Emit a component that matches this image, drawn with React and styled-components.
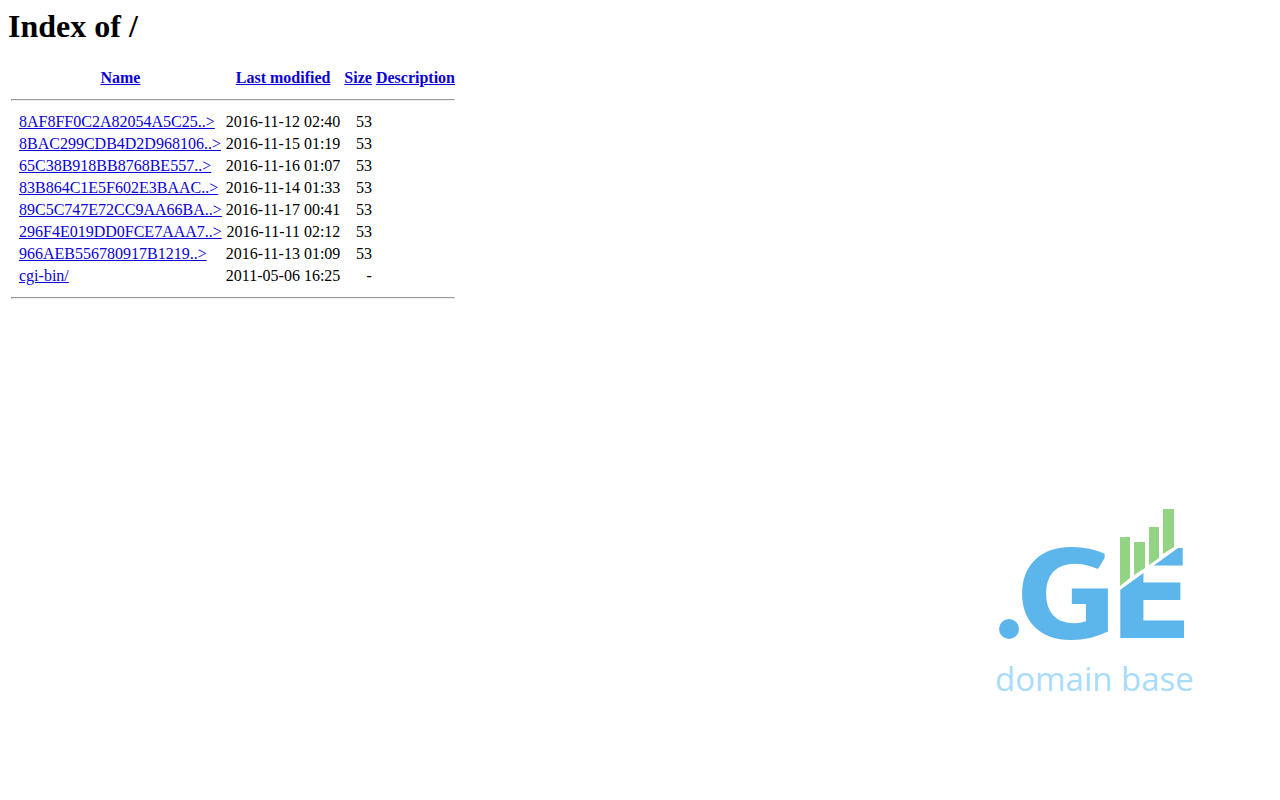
import React from 'react'
import styled, { createGlobalStyle } from 'styled-components'

const GlobalStyle = createGlobalStyle`
    body {
        margin: 0;
        background-color: white;
        color: black;
        font-family: "Liberation Serif", "Times New Roman", serif;
        font-size: 16px;
    }
`;

const Page = styled.div`
    box-sizing: border-box;
    min-height: 100vh;
    padding: 8px;
    display: flex;
    flex-direction: column;
    align-items: flex-start;
`;

const Title = styled.h1`
    margin: 0 0 21px;
    font-size: 32px;
    line-height: 37px;
    font-weight: bold;
`;

const Listing = styled.table`
    border-spacing: 2px;
    line-height: 18px;

    th, td {
        padding: 1px;
        white-space: nowrap;
    }
`;

const Cell = styled.td`
    text-align: ${props => props.$align || 'left'};
`;

const Link = styled.a`
    color: #0a00d8;
    text-decoration: underline;
`;

const Rule = styled.hr`
    margin: 8px 0;
    border: 1px solid;
    border-color: #9a9a9a #eeeeee #eeeeee #9a9a9a;
`;

const Logo = styled.svg`
    width: 210px;
    height: 200px;
    margin: auto 72px 92px 0;
    align-self: flex-end;
    flex-shrink: 0;
`;

const Letter = styled.text`
    fill: #5cb5eb;
    font-family: "DejaVu Sans", sans-serif;
    font-size: 123px;
    font-weight: bold;
`;

const Caption = styled.text`
    fill: #a9dbfb;
    font-family: "Open Sans", sans-serif;
    font-size: 33px;
`;

const columns = ['Name', 'Last modified', 'Size', 'Description']

const files = [
    { name: '8AF8FF0C2A82054A5C25..>', modified: '2016-11-12 02:40', size: '53' },
    { name: '8BAC299CDB4D2D968106..>', modified: '2016-11-15 01:19', size: '53' },
    { name: '65C38B918BB8768BE557..>', modified: '2016-11-16 01:07', size: '53' },
    { name: '83B864C1E5F602E3BAAC..>', modified: '2016-11-14 01:33', size: '53' },
    { name: '89C5C747E72CC9AA66BA..>', modified: '2016-11-17 00:41', size: '53' },
    { name: '296F4E019DD0FCE7AAA7..>', modified: '2016-11-11 02:12', size: '53' },
    { name: '966AEB556780917B1219..>', modified: '2016-11-13 01:09', size: '53' },
    { name: 'cgi-bin/', modified: '2011-05-06 16:25', size: '-' },
]

const RuleRow = () => (
    <tr>
        <td colSpan="5"><Rule /></td>
    </tr>
)

const DomainLogo = () => (
    <Logo viewBox="0 0 210 200" role="img" aria-label=".GE domain base">
        <circle cx="19" cy="129" r="10" fill="#5cb5eb" />
        <Letter x="26" y="138">G</Letter>
        <Letter x="119" y="138">E</Letter>
        {/* slanted end of the G, then the diagonal cut through the top of the E */}
        <polygon points="117,54 105,74 117,76" fill="white" />
        <polygon points="126,40 204,40 204,48 188,48 130,90 126,90" fill="white" />
        <g fill="#93d484">
            <polygon points="130,37 140,37 140,78 130,86" />
            <polygon points="144,42 155,42 155,68 144,75" />
            <polygon points="159,27 169,27 169,58 159,65" />
            <polygon points="173,9 184,9 184,47 173,54" />
        </g>
        <Caption x="5" y="191">domain base</Caption>
    </Logo>
)

const App = () => {
    return (
        <>
            <GlobalStyle />
            <Page>
                <Title>Index of /</Title>
                <Listing>
                    <thead>
                        <tr>
                            <td>&nbsp;</td>
                            {columns.map(column => (
                                <th key={column} scope="col"><Link href="#">{column}</Link></th>
                            ))}
                        </tr>
                    </thead>
                    <tbody>
                        <RuleRow />
                        {files.map(file => (
                            <tr key={file.name}>
                                <Cell>&nbsp;</Cell>
                                <Cell><Link href="#">{file.name}</Link></Cell>
                                <Cell $align="right">{file.modified}</Cell>
                                <Cell $align="right">{file.size}</Cell>
                                <Cell />
                            </tr>
                        ))}
                        <RuleRow />
                    </tbody>
                </Listing>
                <DomainLogo />
            </Page>
        </>
    )
}

export default App
